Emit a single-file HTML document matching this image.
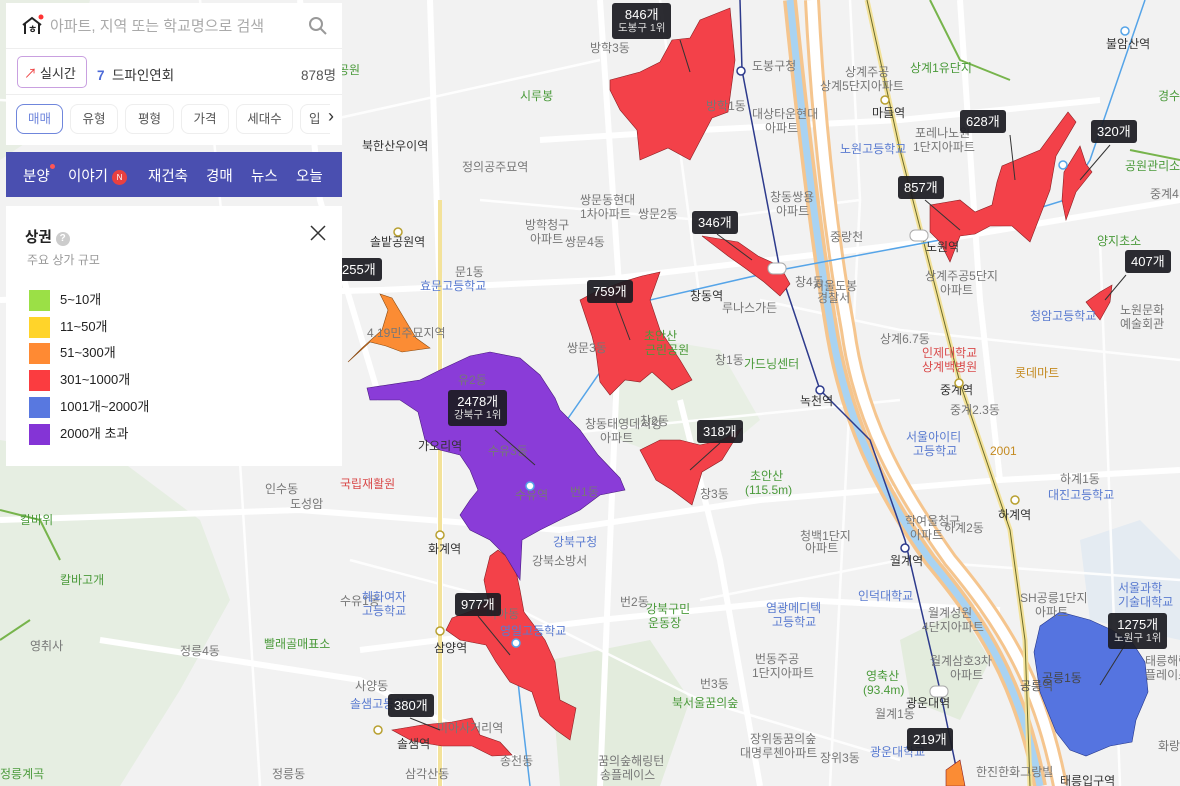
<!DOCTYPE html>
<html><head><meta charset="utf-8"><style>
*{margin:0;padding:0;box-sizing:border-box}
body{width:1180px;height:786px;overflow:hidden;background:#f2f2f2;font-family:"Liberation Sans","Noto Sans CJK KR",sans-serif;position:relative}
svg{position:absolute;left:0;top:0}
.lbl{position:absolute;background:rgba(28,28,34,.93);color:#fff;font-size:13px;border-radius:3px;padding:4px 6px;text-align:center;line-height:15px;white-space:nowrap}
.lbl small{display:block;font-size:10.5px;color:#ddd;line-height:13px}
.panel{position:absolute;left:6px;background:#fff}
</style></head><body>
<svg width="1180" height="786" viewBox="0 0 1180 786" font-family="Liberation Sans, Noto Sans CJK KR, sans-serif">
<!-- parks -->
<path d="M0 440 L120 460 L200 520 L230 600 L180 690 L120 786 L0 786Z" fill="#e6eee2"/>
<path d="M600 330 L720 350 L760 420 L700 470 L620 440Z" fill="#e8efe4"/>
<path d="M550 660 L650 640 L690 700 L660 786 L560 786Z" fill="#e3ecdd"/>
<path d="M900 640 L960 610 L990 660 L960 720 L910 700Z" fill="#e3ecdd"/>
<path d="M1080 540 L1140 520 L1180 560 L1180 640 L1090 620Z" fill="#e4ebf2"/>
<path d="M0 0 L90 0 L60 120 L0 160Z" fill="#e8eee4"/>
<!-- roads -->
<g stroke="#fff" stroke-width="6" fill="none">
<path d="M0 300 L380 290 L600 280 L940 240 L1180 200"/>
<path d="M0 520 L300 510 L560 530 L760 500 L1000 480 L1180 470"/>
<path d="M430 0 L440 300 L440 786"/>
<path d="M600 0 L620 300 L600 786"/>
<path d="M680 400 L720 560 L760 786"/>
<path d="M540 140 L700 130 L900 120 L1100 100"/>
<path d="M360 650 L600 620 L800 600 L1000 610"/>
<path d="M960 0 L980 300 L1000 480"/>
<path d="M300 0 L320 200 L380 400"/>
<path d="M100 640 L360 680 L520 760"/>
</g>
<g stroke="#fff" stroke-width="2.5" fill="none" opacity=".9">
<path d="M0 100 L330 120 L600 60"/><path d="M200 0 L230 300 L260 786"/>
<path d="M480 200 L700 220 L860 200"/><path d="M660 0 L700 300"/>
<path d="M700 600 L900 560 L1180 580"/><path d="M760 300 L900 330 L1180 360"/>
<path d="M500 440 L700 420 L900 400"/><path d="M850 0 L860 200 L830 786"/>
<path d="M1100 240 L1120 786"/><path d="M350 560 L500 600 L700 700 L900 760"/>
</g>
<!-- stream & expressway -->
<path d="M812 0 C818 120 830 230 848 330 C860 420 900 490 950 560 C1000 620 1040 680 1060 786" stroke="#f5c58e" stroke-width="16" fill="none"/>
<path d="M812 0 C818 120 830 230 848 330 C860 420 900 490 950 560 C1000 620 1040 680 1060 786" stroke="#fff" stroke-width="10" fill="none"/>
<path d="M790 0 C800 100 815 230 830 320 C845 420 880 490 930 560 C980 620 1020 680 1040 786" stroke="#f5c58e" stroke-width="14" fill="none"/>
<path d="M790 0 C800 100 815 230 830 320 C845 420 880 490 930 560 C980 620 1020 680 1040 786" stroke="#a9d3f2" stroke-width="7" fill="none"/>
<path d="M867 0 L900 150 L960 383 L1010 530 L1025 640 L1030 786" stroke="#f3e29a" stroke-width="5" fill="none"/>
<path d="M867 0 L900 150 L960 383 L1010 530 L1025 640 L1030 786" stroke="#6b6b2a" stroke-width="1" fill="none"/>
<path d="M440 200 L440 786" stroke="#f3e29a" stroke-width="4" fill="none"/>
<!-- subway lines -->
<path d="M740 0 L742 70 L780 270 L820 390 L870 440 L905 540 L940 690 L960 786" stroke="#2d3a8c" stroke-width="1.5" fill="none"/>
<path d="M1145 0 L1090 160 L1065 200 L1000 220 L940 240 L780 270 L650 300 L560 430 L520 500 L505 560 L520 700 L530 786" stroke="#55a4e8" stroke-width="1.5" fill="none"/>
<!-- green trails -->
<path d="M0 510 L40 520 L60 560 M0 640 L30 620" stroke="#77b44c" stroke-width="2" fill="none"/>
<path d="M930 0 L960 60 L1010 80 M1130 150 L1180 160" stroke="#77b44c" stroke-width="2" fill="none"/>
<!-- polygons -->
<g stroke="#8a1e22" stroke-width=".6">
<path d="M610 80 L640 72 L660 62 L672 40 L690 38 L700 20 L730 8 L735 60 L728 112 L712 118 L690 160 L668 148 L640 160 L637 130 L620 110 L610 90Z" fill="#f34149"/>
<path d="M580 300 L595 292 L622 282 L642 276 L660 272 L650 300 L660 330 L680 360 L692 380 L672 390 L652 372 L640 382 L625 380 L610 395 L600 382 L596 352 L592 336Z" fill="#f34149"/>
<path d="M640 450 L660 440 L680 440 L700 445 L722 440 L742 428 L722 460 L702 472 L692 505 L672 490 L656 480Z" fill="#f34149"/>
<path d="M702 236 L738 242 L758 256 L780 266 L790 284 L780 296 L764 282 L745 268 L728 256Z" fill="#f34149"/>
<path d="M930 205 L960 200 L975 212 L992 205 L997 182 L1002 166 L1040 150 L1068 112 L1076 122 L1056 156 L1050 190 L1040 216 L1030 242 L1012 226 L990 226 L975 234 L960 236 L950 262 L940 242 L930 232Z" fill="#f34149"/>
<path d="M1064 172 L1080 146 L1086 164 L1092 172 L1076 192 L1066 220 L1062 200Z" fill="#f34149"/>
<path d="M1086 302 L1100 292 L1112 285 L1110 302 L1100 320Z" fill="#f34149"/>
<path d="M490 556 L498 550 L514 562 L520 590 L524 612 L545 640 L555 662 L560 700 L576 708 L570 740 L556 730 L540 716 L532 692 L510 682 L496 662 L486 645 L460 640 L446 630 L452 618 L474 610 L488 600 L484 580Z" fill="#f34149"/>
<path d="M392 730 L422 725 L452 722 L472 718 L480 735 L500 742 L512 755 L492 756 L472 746 L442 746 L412 741Z" fill="#f34149"/>
<path d="M367 388 L420 380 L440 370 L470 356 L490 352 L520 358 L540 375 L555 398 L560 410 L580 430 L598 455 L620 478 L625 490 L600 495 L580 510 L560 520 L540 530 L522 540 L520 580 L505 555 L490 540 L470 530 L460 515 L470 500 L478 490 L470 470 L460 455 L440 450 L425 440 L418 412 L400 400 L370 400Z" fill="#8a3cd8" stroke="#4a1a80"/>
<path d="M380 294 L392 298 L404 318 L416 338 L430 348 L402 352 L386 346 L370 342 L348 362 L362 348 L382 330 L388 310Z" fill="#fb8c34" stroke="#8a4a10"/>
<path d="M1040 626 L1060 612 L1090 620 L1112 630 L1132 642 L1145 662 L1148 692 L1136 720 L1132 742 L1110 746 L1086 756 L1070 750 L1056 732 L1040 692 L1034 652Z" fill="#5574e0" stroke="#24368a"/>
<path d="M946 770 L960 760 L965 786 L946 786Z" fill="#fb8c34"/>
</g>
<!-- place names -->
<g font-size="12" fill="#777">
<text x="590" y="52">방학3동</text><text x="706" y="110">방학1동</text><text x="752" y="118">대상타운현대</text><text x="765" y="132">아파트</text>
<text x="752" y="70">도봉구청</text><text x="845" y="76">상계주공</text><text x="820" y="90">상계5단지아파트</text><text x="872" y="117" fill="#333">마들역</text>
<text x="915" y="137">포레나노원</text><text x="913" y="151">1단지아파트</text><text x="840" y="153" fill="#5a7bd0">노원고등학교</text>
<text x="462" y="171">정의공주묘역</text><text x="580" y="204">쌍문동현대</text><text x="580" y="218">1차아파트</text><text x="638" y="218">쌍문2동</text>
<text x="525" y="229">방학청구</text><text x="530" y="243">아파트</text><text x="565" y="246">쌍문4동</text><text x="770" y="201">창동쌍용</text><text x="776" y="215">아파트</text>
<text x="370" y="246" fill="#333">솔밭공원역</text><text x="362" y="150" fill="#333">북한산우이역</text><text x="420" y="290" fill="#5a7bd0">효문고등학교</text><text x="455" y="276">문1동</text>
<text x="367" y="337">4.19민주묘지역</text><text x="567" y="352">쌍문3동</text><text x="690" y="300" fill="#333">창동역</text><text x="722" y="312">루나스가든</text>
<text x="644" y="340" fill="#4a9a3a">초안산</text><text x="645" y="354" fill="#4a9a3a">근린공원</text><text x="715" y="364">창1동</text><text x="744" y="368" fill="#4a9a3a">가드닝센터</text>
<text x="795" y="286">창4동</text><text x="813" y="290">서울도봉</text><text x="817" y="302">경찰서</text><text x="926" y="251" fill="#333">노원역</text>
<text x="925" y="280">상계주공5단지</text><text x="940" y="294">아파트</text><text x="880" y="343">상계6.7동</text><text x="922" y="357" fill="#d94a4a">인제대학교</text><text x="922" y="371" fill="#d94a4a">상계백병원</text>
<text x="940" y="394" fill="#333">중계역</text><text x="950" y="414">중계2.3동</text><text x="1015" y="377" fill="#c48a20">롯데마트</text><text x="1030" y="320" fill="#5a7bd0">청암고등학교</text>
<text x="1120" y="314">노원문화</text><text x="1120" y="328">예술회관</text><text x="1106" y="48" fill="#333">불암산역</text><text x="1125" y="170" fill="#4a9a3a">공원관리소</text><text x="1150" y="198">중계4</text>
<text x="1097" y="245" fill="#4a9a3a">양지초소</text><text x="1158" y="100" fill="#4a9a3a">경수</text><text x="910" y="72" fill="#4a9a3a">상계1유단지</text>
<text x="830" y="241">중랑천</text><text x="800" y="405" fill="#333">녹천역</text><text x="585" y="428">창동태영데시앙</text><text x="600" y="442">아파트</text><text x="640" y="425">창2동</text>
<text x="700" y="498">창3동</text><text x="750" y="480" fill="#4a9a3a">초안산</text><text x="745" y="494" fill="#4a9a3a">(115.5m)</text><text x="906" y="441" fill="#5a7bd0">서울아이티</text><text x="913" y="455" fill="#5a7bd0">고등학교</text>
<text x="990" y="455" fill="#c48a20">2001</text><text x="1060" y="483">하계1동</text><text x="1048" y="499" fill="#5a7bd0">대진고등학교</text><text x="998" y="519" fill="#333">하계역</text>
<text x="905" y="525">학여울청구</text><text x="910" y="539">아파트</text><text x="944" y="532">하계2동</text><text x="800" y="540">청백1단지</text><text x="805" y="552">아파트</text>
<text x="890" y="565" fill="#333">월계역</text><text x="858" y="600" fill="#5a7bd0">인덕대학교</text><text x="766" y="612" fill="#5a7bd0">염광메디텍</text><text x="772" y="626" fill="#5a7bd0">고등학교</text>
<text x="928" y="617">월계성원</text><text x="922" y="631">4단지아파트</text><text x="1020" y="602">SH공릉1단지</text><text x="1035" y="616">아파트</text><text x="1118" y="592" fill="#5a7bd0">서울과학</text><text x="1118" y="606" fill="#5a7bd0">기술대학교</text>
<text x="930" y="665">월계삼호3차</text><text x="950" y="679">아파트</text><text x="866" y="680" fill="#4a9a3a">영축산</text><text x="863" y="694" fill="#4a9a3a">(93.4m)</text><text x="906" y="707" fill="#333">광운대역</text>
<text x="875" y="718">월계1동</text><text x="870" y="756" fill="#5a7bd0">광운대학교</text><text x="820" y="762">장위3동</text><text x="976" y="776">한진한화그랑빌</text><text x="1145" y="665">태릉해링</text><text x="1145" y="679">플레이스</text><text x="1158" y="750">화랑</text>
<text x="1060" y="785" fill="#333">태릉입구역</text><text x="755" y="663">번동주공</text><text x="752" y="677">1단지아파트</text><text x="750" y="743">장위동꿈의숲</text><text x="740" y="757">대명루첸아파트</text>
<text x="700" y="688">번3동</text><text x="672" y="707" fill="#4a9a3a">북서울꿈의숲</text><text x="620" y="606">번2동</text><text x="646" y="613" fill="#4a9a3a">강북구민</text><text x="648" y="627" fill="#4a9a3a">운동장</text>
<text x="532" y="565">강북소방서</text><text x="553" y="546" fill="#5a7bd0">강북구청</text><text x="570" y="496">번1동</text><text x="488" y="455">수유3동</text><text x="515" y="499">수유역</text><text x="458" y="384">유2동</text>
<text x="418" y="450" fill="#333">가오리역</text><text x="340" y="488" fill="#d94a4a">국립재활원</text><text x="265" y="493">인수동</text><text x="290" y="508">도성암</text><text x="428" y="553" fill="#333">화계역</text>
<text x="340" y="605">수유1동</text><text x="362" y="601" fill="#5a7bd0">혜화여자</text><text x="362" y="615" fill="#5a7bd0">고등학교</text><text x="486" y="618">미아동</text><text x="500" y="635" fill="#5a7bd0">영일고등학교</text>
<text x="434" y="652" fill="#333">삼양역</text><text x="355" y="690">사양동</text><text x="350" y="708" fill="#5a7bd0">솔샘고등학교</text><text x="437" y="732">미아사거리역</text><text x="397" y="748" fill="#333">솔샘역</text>
<text x="500" y="765">송천동</text><text x="405" y="778">삼각산동</text><text x="598" y="765">꿈의숲해링턴</text><text x="600" y="779">송플레이스</text><text x="272" y="778">정릉동</text><text x="180" y="655">정릉4동</text>
<text x="264" y="648" fill="#4a9a3a">빨래골매표소</text><text x="30" y="650">영취사</text><text x="0" y="778" fill="#4a9a3a">정릉계곡</text><text x="60" y="584" fill="#4a9a3a">칼바고개</text><text x="20" y="524" fill="#4a9a3a">칼바위</text>
<text x="338" y="74" fill="#4a9a3a">공원</text><text x="520" y="100" fill="#4a9a3a">시루봉</text>
</g>
<text x="1020" y="690" font-size="12" fill="#555">공릉역</text>
<text x="1042" y="682" font-size="12" fill="#444">공릉1동</text>
<!-- stations -->
<g fill="#fff" stroke="#2d3a8c" stroke-width="1.5"><circle cx="741" cy="71" r="4"/><circle cx="820" cy="390" r="4"/><circle cx="905" cy="548" r="4"/></g>
<g fill="#fff" stroke="#b8a030" stroke-width="1.5"><circle cx="885" cy="100" r="4"/><circle cx="959" cy="383" r="4"/><circle cx="1015" cy="500" r="4"/><circle cx="440" cy="535" r="4"/><circle cx="440" cy="631" r="4"/><circle cx="378" cy="730" r="4"/><circle cx="398" cy="232" r="4"/></g>
<g fill="#fff" stroke="#55a4e8" stroke-width="1.5"><circle cx="1125" cy="31" r="4"/><circle cx="1063" cy="165" r="4"/><circle cx="530" cy="486" r="4"/><circle cx="516" cy="643" r="4"/></g>
<rect x="768" y="263" width="18" height="11" rx="5" fill="#fff" stroke="#aaa"/><rect x="910" y="230" width="18" height="11" rx="5" fill="#fff" stroke="#aaa"/><rect x="930" y="686" width="18" height="11" rx="5" fill="#fff" stroke="#aaa"/>
<!-- leader lines -->
<g stroke="#333" stroke-width="1"><line x1="680" y1="40" x2="690" y2="72"/><line x1="495" y1="430" x2="535" y2="465"/><line x1="615" y1="300" x2="630" y2="340"/><line x1="720" y1="443" x2="690" y2="470"/><line x1="717" y1="234" x2="752" y2="260"/><line x1="925" y1="200" x2="960" y2="230"/><line x1="1010" y1="135" x2="1015" y2="180"/><line x1="1110" y1="145" x2="1080" y2="180"/><line x1="1126" y1="275" x2="1105" y2="300"/><line x1="478" y1="616" x2="510" y2="655"/><line x1="410" y1="718" x2="440" y2="730"/><line x1="1125" y1="645" x2="1100" y2="685"/></g>
</svg>

<div class="lbl" style="left:612px;top:3px">846개<small>도봉구 1위</small></div>
<div class="lbl" style="left:448px;top:390px">2478개<small>강북구 1위</small></div>
<div class="lbl" style="left:587px;top:280px">759개</div>
<div class="lbl" style="left:697px;top:420px">318개</div>
<div class="lbl" style="left:692px;top:211px">346개</div>
<div class="lbl" style="left:898px;top:176px">857개</div>
<div class="lbl" style="left:960px;top:110px">628개</div>
<div class="lbl" style="left:1091px;top:120px">320개</div>
<div class="lbl" style="left:1125px;top:250px">407개</div>
<div class="lbl" style="left:455px;top:593px">977개</div>
<div class="lbl" style="left:388px;top:694px">380개</div>
<div class="lbl" style="left:1108px;top:613px">1275개<small>노원구 1위</small></div>
<div class="lbl" style="left:907px;top:728px">219개</div>
<div class="lbl" style="left:332px;top:258px;padding-left:10px">255개</div>

<!-- left panel -->
<div class="panel" style="top:3px;width:336px;height:142px;">
  <div style="height:46px;border-bottom:1px solid #eee;display:flex;align-items:center;padding-left:14px">
    <svg width="24" height="24" viewBox="0 0 24 24" style="position:static"><path d="M3 11 L12 4 L21 11" stroke="#222" stroke-width="2" fill="none"/><path d="M5 10 V20 M19 10 V20" stroke="#222" stroke-width="2"/><text x="8" y="19" font-size="10" font-weight="bold" fill="#222">ㅎ</text><circle cx="21" cy="3" r="2.5" fill="#f33"/></svg>
    <span style="color:#aaa;font-size:15px;margin-left:6px">아파트, 지역 또는 학교명으로 검색</span>
    <svg width="20" height="20" style="position:absolute;left:302px;top:13px"><circle cx="8" cy="8" r="6" stroke="#999" stroke-width="2" fill="none"/><line x1="12.5" y1="12.5" x2="18" y2="18" stroke="#999" stroke-width="2"/></svg>
  </div>
  <div style="height:46px;border-bottom:1px solid #eee;position:relative">
    <div style="position:absolute;left:11px;top:53px"></div>
    <div style="position:absolute;left:11px;top:7px;width:70px;height:32px;border:1px solid #c9a0e0;border-radius:5px;font-size:13px;color:#333;display:flex;align-items:center;padding-left:6px"><span style="color:#e44;font-size:13px;margin-right:3px">↗</span>실시간</div>
    <div style="position:absolute;left:91px;top:15px;font-size:13.5px;color:#333"><b style="color:#4c6ad8">7</b>&nbsp; 드파인연회</div>
    <div style="position:absolute;right:6px;top:15px;font-size:13.5px;color:#555">878명</div>
  </div>
  <div style="position:relative;height:48px">
    <div style="position:absolute;left:10px;top:9px;width:47px;height:30px;border:1px solid #6f86dc;border-radius:8px;color:#6f86dc;font-size:12.5px;text-align:center;line-height:28px">매매</div>
    <div style="position:absolute;left:64px;top:9px;width:48px;height:30px;border:1px solid #eee;border-radius:8px;color:#555;font-size:12.5px;text-align:center;line-height:28px">유형</div>
    <div style="position:absolute;left:119px;top:9px;width:49px;height:30px;border:1px solid #eee;border-radius:8px;color:#555;font-size:12.5px;text-align:center;line-height:28px">평형</div>
    <div style="position:absolute;left:175px;top:9px;width:48px;height:30px;border:1px solid #eee;border-radius:8px;color:#555;font-size:12.5px;text-align:center;line-height:28px">가격</div>
    <div style="position:absolute;left:230px;top:9px;width:57px;height:30px;border:1px solid #eee;border-radius:8px;color:#555;font-size:12.5px;text-align:center;line-height:28px">세대수</div>
    <div style="position:absolute;left:294px;top:9px;width:30px;height:30px;border:1px solid #eee;border-right:none;border-radius:8px 0 0 8px;color:#555;font-size:12.5px;line-height:28px;padding-left:8px;overflow:hidden">입</div>
    <div style="position:absolute;left:322px;top:11px;font-size:18px;color:#333">›</div>
  </div>
</div>
<div class="panel" style="top:152px;width:336px;height:45px;background:#4a4fb0;color:#fff;font-size:14.5px">
  <span style="position:absolute;left:17px;top:13px">분양<i style="display:inline-block;width:5px;height:5px;background:#f55;border-radius:50%;vertical-align:top;margin-top:-1px"></i></span>
  <span style="position:absolute;left:62px;top:13px">이야기 <span style="display:inline-block;width:15px;height:15px;border-radius:50%;background:#e94040;font-size:8px;text-align:center;line-height:15px;vertical-align:1px">N</span></span>
  <span style="position:absolute;left:142px;top:13px">재건축</span>
  <span style="position:absolute;left:200px;top:13px">경매</span>
  <span style="position:absolute;left:245px;top:13px">뉴스</span>
  <span style="position:absolute;left:290px;top:13px">오늘</span>
</div>
<div class="panel" style="top:206px;width:336px;height:260px">
  <div style="position:absolute;left:19px;top:20px;font-size:14.5px;font-weight:bold;color:#222">상권 <span style="display:inline-block;width:14px;height:14px;border-radius:50%;background:#ccc;color:#fff;font-size:10px;text-align:center;line-height:14px;vertical-align:1px">?</span></div>
  <svg width="18" height="18" style="left:303px;top:18px"><path d="M2 2 L16 16 M16 2 L2 16" stroke="#333" stroke-width="1.5"/></svg>
  <div style="position:absolute;left:21px;top:45px;font-size:12px;color:#999">주요 상가 규모</div>
  <div style="position:absolute;left:23px;top:81px;font-size:13px;color:#222;line-height:26.7px">
    <div><span style="display:inline-block;width:21px;height:21px;background:#9be046;vertical-align:middle;margin-right:10px"></span>5~10개</div>
    <div><span style="display:inline-block;width:21px;height:21px;background:#ffd42a;vertical-align:middle;margin-right:10px"></span>11~50개</div>
    <div><span style="display:inline-block;width:21px;height:21px;background:#ff8a33;vertical-align:middle;margin-right:10px"></span>51~300개</div>
    <div><span style="display:inline-block;width:21px;height:21px;background:#fb3c40;vertical-align:middle;margin-right:10px"></span>301~1000개</div>
    <div><span style="display:inline-block;width:21px;height:21px;background:#5878e0;vertical-align:middle;margin-right:10px"></span>1001개~2000개</div>
    <div><span style="display:inline-block;width:21px;height:21px;background:#8434d6;vertical-align:middle;margin-right:10px"></span>2000개 초과</div>
  </div>
</div>
</body></html>
